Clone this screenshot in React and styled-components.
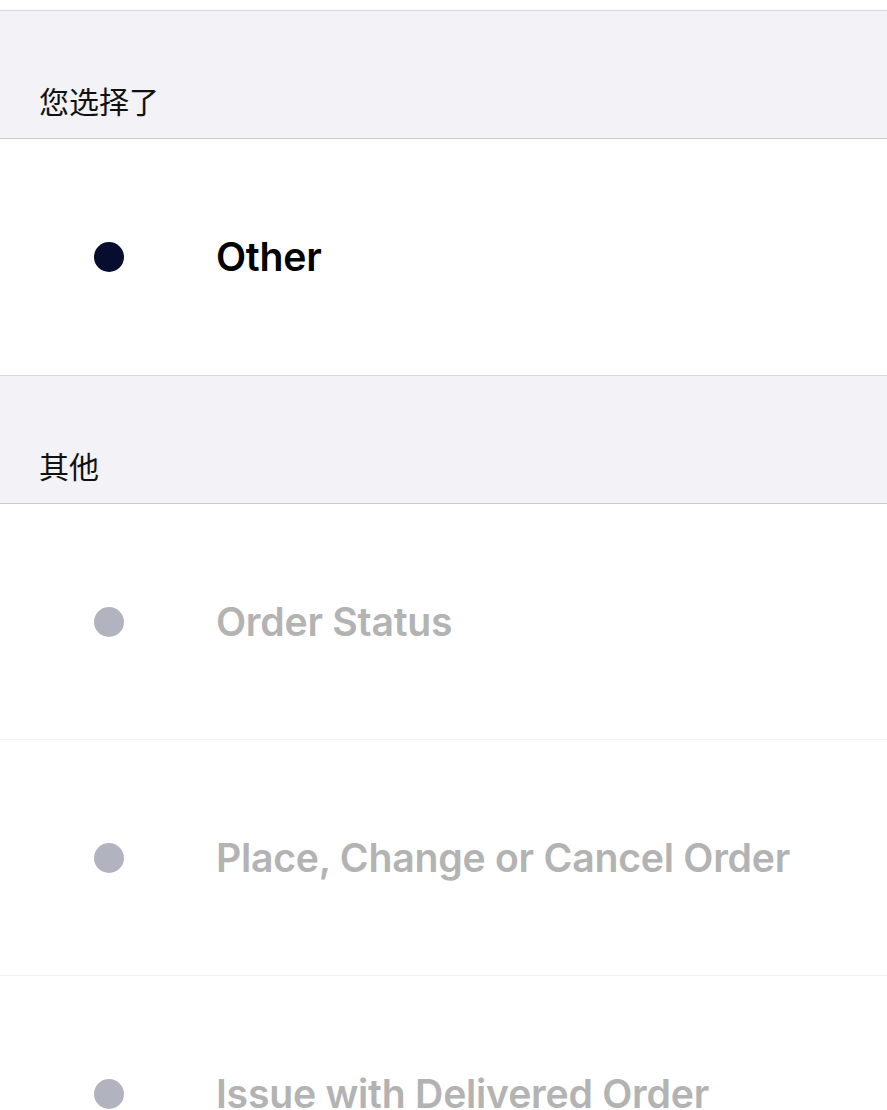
import React from "react";
import styled, { createGlobalStyle } from "styled-components";

const Global = createGlobalStyle`
  html, body { margin: 0; padding: 0; background: #ffffff; }
  body { font-family: Inter, "Noto Sans CJK SC", sans-serif; overflow: hidden; }
`;

const Page = styled.div`
  width: 887px;
  height: 1110px;
  overflow: hidden;
  padding-top: 10px;
  box-sizing: border-box;
  background: #ffffff;
`;

const SectionHeader = styled.div`
  height: 127px;
  box-sizing: content-box;
  background: #f2f2f7;
  border-top: 1px solid #d6d6dc;
  border-bottom: 1px solid #c9c9cf;
  display: flex;
  align-items: flex-end;
  padding-left: 39px;
`;

const HeaderText = styled.span`
  font-family: "Noto Sans CJK SC", sans-serif;
  font-size: 30px;
  color: #111111;
  line-height: 1;
  margin-bottom: 23px;
`;

const Row = styled.div`
  height: 236px;
  display: flex;
  align-items: center;
  border-bottom: 1px solid ${(p) => (p.$last ? "transparent" : "#f0f0f3")};
  box-sizing: border-box;
`;

const Dot = styled.span`
  width: 30px;
  height: 30px;
  border-radius: 50%;
  background: ${(p) => (p.$active ? "#060d2e" : "#b1b4bf")};
  margin-left: 94px;
  flex-shrink: 0;
`;

const Label = styled.span`
  margin-left: 92px;
  font-family: Inter, "Noto Sans", sans-serif;
  font-size: 39.2px;
  font-weight: 600;
  letter-spacing: -0.25px;
  white-space: nowrap;
  color: ${(p) => (p.$active ? "#000000" : "#b3b3b3")};
`;

const options = [
  "Order Status",
  "Place, Change or Cancel Order",
  "Issue with Delivered Order",
];

export default function App() {
  return (
    <>
      <Global />
      <Page>
        <SectionHeader>
          <HeaderText>您选择了</HeaderText>
        </SectionHeader>
        <Row $last>
          <Dot $active />
          <Label $active>Other</Label>
        </Row>
        <SectionHeader>
          <HeaderText>其他</HeaderText>
        </SectionHeader>
        {options.map((o) => (
          <Row key={o}>
            <Dot />
            <Label>{o}</Label>
          </Row>
        ))}
      </Page>
    </>
  );
}
